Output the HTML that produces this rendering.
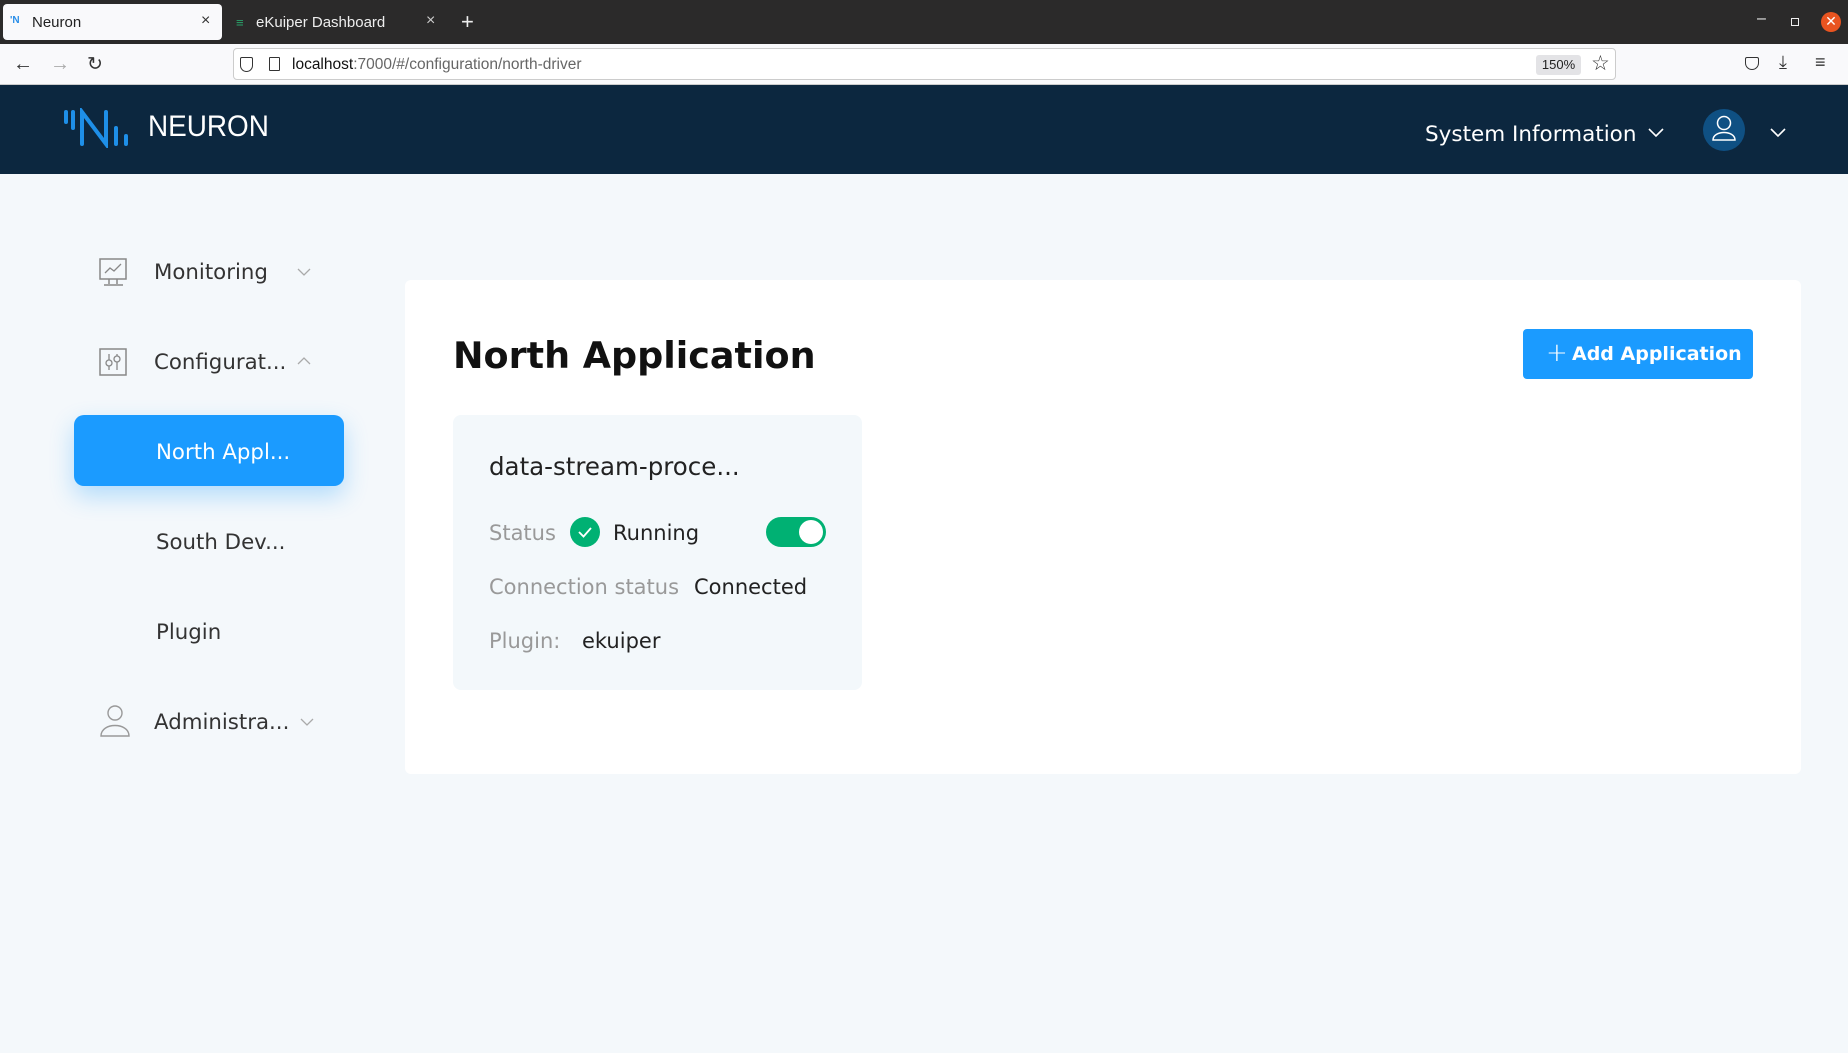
<!DOCTYPE html>
<html><head><meta charset="utf-8"><style>
*{box-sizing:border-box;margin:0;padding:0}
body{width:1848px;height:1053px;overflow:hidden;background:#f4f8fb;font-family:"DejaVu Sans","Liberation Sans",sans-serif;position:relative}
.abs{position:absolute}
.tabbar{left:0;top:0;width:1848px;height:44px;background:#2b2a2a}
.nav{left:0;top:44px;width:1848px;height:41px;background:#f9f9fb;border-bottom:1px solid #ccc}
.hdr{left:0;top:85px;width:1848px;height:89px;background:#0c273f}
.ff{font-family:"Liberation Sans",sans-serif}
.side{font-size:21.3px;color:#333}
.card{left:405px;top:280px;width:1396px;height:494px;background:#fff;border-radius:6px}
.inner{left:453px;top:415px;width:409px;height:275px;background:#f3f8fb;border-radius:8px}
.lbl{color:#999;font-size:21px}
.val{color:#222;font-size:21px}
</style></head><body>
<div class="abs tabbar"></div>
<div class="abs" style="left:3px;top:4px;width:219px;height:36px;background:#f9f9fb;border-radius:4px"></div>
<div class="abs ff" style="left:10px;top:15px;font-size:10px;color:#2a8ee8;font-weight:bold">'N</div>
<div class="abs ff" style="left:32px;top:14px;font-size:15px;color:#222">Neuron</div>
<div class="abs ff" style="left:201px;top:12px;font-size:16px;color:#333">×</div>
<div class="abs ff" style="left:236px;top:15px;font-size:13px;color:#2aa36b">≡</div>
<div class="abs ff" style="left:256px;top:14px;font-size:15px;color:#eee">eKuiper Dashboard</div>
<div class="abs ff" style="left:426px;top:12px;font-size:16px;color:#ccc">×</div>
<div class="abs ff" style="left:461px;top:9px;font-size:22px;color:#eee">+</div>
<div class="abs ff" style="left:1757px;top:10px;font-size:16px;color:#eee">–</div>
<div class="abs" style="left:1791px;top:18px;width:8px;height:8px;border:1.5px solid #eee"></div>
<div class="abs" style="left:1821px;top:12px;width:20px;height:20px;border-radius:50%;background:#e95420;color:#fff;font-size:14px;text-align:center;line-height:20px" >✕</div>
<div class="abs nav"></div>
<div class="abs ff" style="left:13px;top:53px;font-size:20px;color:#333">←</div>
<div class="abs ff" style="left:50px;top:53px;font-size:20px;color:#aaa">→</div>
<div class="abs ff" style="left:87px;top:53px;font-size:19px;color:#333">↻</div>
<div class="abs" style="left:233px;top:48px;width:1383px;height:32px;background:#fff;border:1px solid #ccc;border-radius:4px"></div>
<div class="abs" style="left:240px;top:57px;width:13px;height:15px;border:1.5px solid #333;border-radius:2px 2px 7px 7px"></div>
<div class="abs" style="left:269px;top:57px;width:11px;height:14px;border:1.5px solid #333;border-radius:1px"></div>
<div class="abs ff" style="left:292px;top:56px;font-size:15.5px;color:#666"><span style="color:#111">localhost</span>:7000/#/configuration/north-driver</div>
<div class="abs ff" style="left:1536px;top:55px;width:45px;height:20px;background:#e3e3e6;border-radius:3px;font-size:13px;text-align:center;line-height:20px;color:#222">150%</div>
<div class="abs ff" style="left:1591px;top:51px;font-size:21px;color:#333">☆</div>
<div class="abs" style="left:1745px;top:57px;width:14px;height:13px;border:1.5px solid #333;border-radius:2px 2px 7px 7px"></div>
<div class="abs ff" style="left:1779px;top:52px;font-size:18px;color:#333">⤓</div>
<div class="abs ff" style="left:1815px;top:52px;font-size:18px;color:#333">≡</div>
<div class="abs hdr"></div>
<svg class="abs" style="left:62px;top:108px" width="72" height="40" viewBox="0 0 72 40">
<g stroke="#1e8fe8" stroke-width="4" stroke-linecap="round" fill="none">
<line x1="4" y1="4" x2="4" y2="14"/><line x1="11" y1="4" x2="11" y2="20"/>
<path d="M20 36 V4 L44 36 V4"/><line x1="54" y1="20" x2="54" y2="36"/><line x1="64" y1="28" x2="64" y2="36"/></g></svg>
<div class="abs ff" style="left:148px;top:110px;font-size:30px;color:#fff;transform:scaleX(0.93);transform-origin:left">NEURON</div>
<div class="abs" style="left:1425px;top:122px;font-size:21.5px;color:#fff">System Information</div>
<svg class="abs" style="left:1648px;top:128px" width="16" height="10"><path d="M1 1 L8 8 L15 1" stroke="#fff" stroke-width="1.6" fill="none"/></svg>
<div class="abs" style="left:1703px;top:109px;width:42px;height:42px;border-radius:50%;background:#0f5083"></div>
<svg class="abs" style="left:1710px;top:114px" width="28" height="30"><circle cx="14" cy="9" r="6.5" stroke="#fff" stroke-width="1.5" fill="none"/><path d="M3 26 C3 16 25 16 25 26 Z" stroke="#fff" stroke-width="1.5" fill="none"/></svg>
<svg class="abs" style="left:1770px;top:128px" width="16" height="10"><path d="M1 1 L8 8 L15 1" stroke="#fff" stroke-width="1.6" fill="none"/></svg>

<svg class="abs" style="left:99px;top:258px" width="30" height="30"><rect x="1" y="1" width="26" height="20" stroke="#888" stroke-width="1.5" fill="none"/><path d="M6 15 L11 10 L15 13 L22 6" stroke="#888" stroke-width="1.3" fill="none"/><path d="M10 21 V26 M18 21 V26 M5 27 H24" stroke="#888" stroke-width="1.5"/></svg>
<div class="abs side" style="left:154px;top:260px">Monitoring</div>
<svg class="abs" style="left:297px;top:268px" width="14" height="8"><path d="M1 1 L7 7 L13 1" stroke="#aaa" stroke-width="1.3" fill="none"/></svg>
<svg class="abs" style="left:99px;top:348px" width="30" height="30"><rect x="1" y="1" width="26" height="26" stroke="#888" stroke-width="1.5" fill="none"/><path d="M10 6 V22 M18 6 V22" stroke="#888" stroke-width="1.3"/><circle cx="10" cy="15" r="3" fill="#f4f8fb" stroke="#888" stroke-width="1.3"/><circle cx="18" cy="11" r="3" fill="#f4f8fb" stroke="#888" stroke-width="1.3"/></svg>
<div class="abs side" style="left:154px;top:350px">Configurat...</div>
<svg class="abs" style="left:297px;top:357px" width="14" height="8"><path d="M1 7 L7 1 L13 7" stroke="#aaa" stroke-width="1.3" fill="none"/></svg>
<div class="abs" style="left:74px;top:415px;width:270px;height:71px;background:#1b9bff;border-radius:10px;box-shadow:0 10px 24px rgba(27,155,255,0.3)"></div>
<div class="abs side" style="left:156px;top:440px;color:#fff">North Appl...</div>
<div class="abs side" style="left:156px;top:530px">South Dev...</div>
<div class="abs side" style="left:156px;top:620px">Plugin</div>
<svg class="abs" style="left:99px;top:704px" width="34" height="34"><circle cx="16" cy="9" r="7" stroke="#999" stroke-width="1.4" fill="none"/><path d="M2 32 C2 18 30 18 30 32 Z" stroke="#999" stroke-width="1.4" fill="none"/></svg>
<div class="abs side" style="left:154px;top:710px">Administra...</div>
<svg class="abs" style="left:300px;top:718px" width="14" height="8"><path d="M1 1 L7 7 L13 1" stroke="#aaa" stroke-width="1.3" fill="none"/></svg>

<div class="abs card"></div>
<div class="abs" style="left:453px;top:334px;font-size:36.5px;font-weight:bold;color:#111">North Application</div>
<div class="abs" style="left:1523px;top:329px;width:230px;height:50px;background:#1b9bff;border-radius:4px"></div>
<div class="abs" style="left:1546px;top:338px;font-size:26px;color:#fff;font-weight:200">+</div>
<div class="abs" style="left:1572px;top:343px;font-size:19px;color:#fff;font-weight:bold">Add Application</div>
<div class="abs inner"></div>
<div class="abs" style="left:489px;top:452px;font-size:24.5px;color:#222">data-stream-proce...</div>
<div class="abs lbl" style="left:489px;top:521px">Status</div>
<div class="abs" style="left:570px;top:517px;width:30px;height:30px;border-radius:50%;background:#00b173"></div>
<svg class="abs" style="left:570px;top:517px" width="30" height="30"><path d="M9 15 L13.5 19.5 L21 11" stroke="#fff" stroke-width="1.8" fill="none"/></svg>
<div class="abs val" style="left:613px;top:521px">Running</div>
<div class="abs" style="left:766px;top:517px;width:60px;height:30px;border-radius:15px;background:#00b173"></div>
<div class="abs" style="left:799px;top:520px;width:24px;height:24px;border-radius:50%;background:#fff"></div>
<div class="abs lbl" style="left:489px;top:575px">Connection status</div>
<div class="abs val" style="left:694px;top:575px">Connected</div>
<div class="abs lbl" style="left:489px;top:629px">Plugin:</div>
<div class="abs val" style="left:582px;top:629px">ekuiper</div>
</body></html>
